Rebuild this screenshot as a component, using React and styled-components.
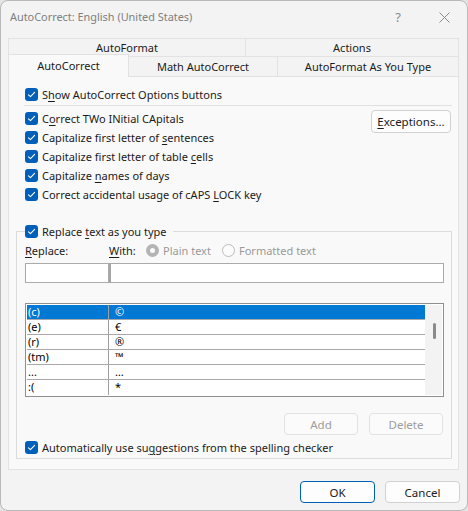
import React from 'react';
import styled, { createGlobalStyle } from 'styled-components';

const GlobalStyle = createGlobalStyle`
  html, body { margin: 0; padding: 0; background: #e4e4e4; }
  * { box-sizing: border-box; }
  body { font-family: "Noto Sans", "Segoe UI", sans-serif; font-size: 11px; color: #1b1b1b; }
`;

const Window = styled.div`
  width: 468px;
  height: 511px;
  border: 1px solid #b9b9b9;
  border-radius: 8px;
  background: #f3f3f3;
  display: flex;
  flex-direction: column;
  overflow: hidden;
`;

const TitleBar = styled.div`
  height: 32px;
  display: flex;
  align-items: center;
  padding-left: 9px;
`;

const Title = styled.div`
  flex: 1;
  color: #808080;
  font-size: 10.9px;
  padding-bottom: 1px;
`;

const TitleButton = styled.div`
  width: 46px;
  height: 32px;
  display: flex;
  align-items: center;
  justify-content: center;
  color: #8a8a8a;
  font-size: 13px;
`;

const Tabs = styled.div`
  margin: 5px 8px 0 7px;
  display: flex;
  flex-direction: column;
`;

const TabRow = styled.div`
  display: flex;
  height: ${p => p.h}px;
  position: relative;
  z-index: ${p => (p.front ? 2 : 1)};
`;

const Tab = styled.div`
  width: ${p => (p.w ? `${p.w}px` : 'auto')};
  flex: ${p => (p.w ? 'none' : 1)};
  display: flex;
  align-items: center;
  justify-content: center;
  border: 1px solid #e2e2e2;
  border-bottom: none;
  margin-left: -1px;
  &:first-child { margin-left: 0; }
  background: ${p => (p.active ? '#f9f9f9' : '#f3f3f3')};
  margin-top: ${p => (p.active ? '-2px' : '0')};
  height: ${p => (p.active ? 'calc(100% + 3px)' : '100%')};
  padding-bottom: ${p => (p.active ? '1px' : '0')};
  color: #1b1b1b;
`;

const Panel = styled.div`
  margin: 0 8px 0 7px;
  border: 1px solid #e2e2e2;
  background: #f9f9f9;
  padding: 8px 6px 10px 7px;
  display: flex;
  flex-direction: column;
`;

const Row = styled.label`
  height: 19px;
  display: flex;
  align-items: center;
  gap: 4px;
  padding-left: ${p => p.indent || 0}px;
  margin-top: ${p => p.mt || 0}px;
  white-space: nowrap;
`;

const Box = styled.span`
  width: 13px;
  height: 13px;
  border-radius: 3px;
  background: #005fb8;
  display: inline-flex;
  align-items: center;
  justify-content: center;
  flex: none;
`;

const U = styled.span`
  text-decoration: underline;
  text-underline-offset: 2px;
`;

const Separator = styled.div`
  height: 1px;
  background: #e0e0e0;
  margin: 1px 0 3px 8px;
`;

const Options = styled.div`
  display: flex;
  justify-content: space-between;
  padding-right: 1px;
`;

const Column = styled.div`
  display: flex;
  flex-direction: column;
`;

const Button = styled.button`
  font: inherit;
  font-size: 11.5px;
  width: ${p => p.w || 75}px;
  height: ${p => p.h || 22}px;
  border-radius: 4px;
  background: ${p => (p.disabled ? '#fbfbfb' : '#fdfdfd')};
  border: 1px solid ${p => (p.primary ? '#005fb8' : p.disabled ? '#e2e2e2' : '#d1d1d1')};
  color: ${p => (p.disabled ? '#9d9d9d' : '#1b1b1b')};
  padding: 0;
  margin-top: ${p => p.mt || 0}px;
`;

const Group = styled.fieldset`
  margin: 18px 0 0;
  border: 1px solid #dcdcdc;
  padding: 0 7px 1px 8px;
  min-width: 0;
`;

const Legend = styled.legend`
  padding: 0 6px 0 0;
  margin: 0;
`;

const LabelRow = styled.div`
  height: 19px;
  display: flex;
  align-items: center;
  white-space: nowrap;
`;

const FieldLabel = styled.span`
  width: ${p => p.w}px;
  flex: none;
`;

const Radio = styled.span`
  width: 13px;
  height: 13px;
  border-radius: 50%;
  border: ${p => (p.checked ? '4px solid #b4b4b4' : '1px solid #bdbdbd')};
  background: #fbfbfb;
  flex: none;
  margin-right: 4px;
`;

const RadioText = styled.span`
  color: #9a9a9a;
  width: ${p => (p.w ? `${p.w}px` : 'auto')};
`;

const Inputs = styled.div`
  margin-top: 3px;
  height: 20px;
  display: flex;
`;

const Input = styled.div`
  height: 20px;
  background: #fff;
  border: 1px solid #ababab;
  width: ${p => (p.w ? `${p.w}px` : 'auto')};
  flex: ${p => (p.w ? 'none' : 1)};
  border-left-width: ${p => (p.w ? 1 : 2)}px;
  border-left-color: #a6a6a6;
`;

const List = styled.div`
  margin-top: 20px;
  height: 94px;
  border: 1px solid #8f8f8f;
  background: #fff;
  padding: 1px;
  display: flex;
`;

const Rows = styled.div`
  flex: 1;
  display: flex;
  flex-direction: column;
`;

const ListRow = styled.div`
  height: 15px;
  flex: none;
  display: grid;
  grid-template-columns: 82px 1fr;
  border-bottom: 1px solid #a9a9a9;
  background: ${p => (p.selected ? '#0078d4' : '#fff')};
  color: ${p => (p.selected ? '#fff' : '#000')};
  line-height: 14px;
  font-size: 11px;
  &:last-child { border-bottom: none; }
`;

const Cell = styled.div`
  padding-left: ${p => p.pl || 1}px;
  border-right: ${p => (p.first ? '1px solid #a0a0a0' : 'none')};
  white-space: nowrap;
`;

const ScrollTrack = styled.div`
  width: 17px;
  background: #f3f3f3;
  display: flex;
  justify-content: center;
  padding-top: 18px;
`;

const Thumb = styled.div`
  width: 3px;
  height: 16px;
  border-radius: 2px;
  background: #8a8a8a;
  margin-left: 1px;
`;

const ButtonRow = styled.div`
  margin-top: 16px;
  display: flex;
  justify-content: flex-end;
  gap: 11px;
  padding-right: 1px;
`;

const Footer = styled.div`
  margin-top: 11px;
  display: flex;
  justify-content: flex-end;
  gap: 10px;
  padding-right: 7px;
`;

const Check = () => (
  <Box>
    <svg width="9" height="9" viewBox="0 0 9 9">
      <polyline points="1.5,4.8 3.5,6.6 7.6,2.3" fill="none" stroke="#fff" strokeWidth="1.1" strokeLinecap="round" strokeLinejoin="round" />
    </svg>
  </Box>
);

const CheckRow = ({ children, indent, mt }) => (
  <Row indent={indent} mt={mt}>
    <Check />
    <span>{children}</span>
  </Row>
);

const entries = [
  ['(c)', '©'],
  ['(e)', '€'],
  ['(r)', '®'],
  ['(tm)', '™'],
  ['...', '…'],
  [':(', '*'],
];

export default function App() {
  return (
    <>
      <GlobalStyle />
      <Window>
        <TitleBar>
          <Title>AutoCorrect: English (United States)</Title>
          <TitleButton>?</TitleButton>
          <TitleButton>
            <svg width="11" height="11" viewBox="0 0 11 11">
              <path d="M0.5 0.5 L10.5 10.5 M10.5 0.5 L0.5 10.5" stroke="#8a8a8a" strokeWidth="1" />
            </svg>
          </TitleButton>
        </TitleBar>

        <Tabs>
          <TabRow h={18}>
            <Tab w={238}>AutoFormat</Tab>
            <Tab>Actions</Tab>
          </TabRow>
          <TabRow h={20} front>
            <Tab w={121} active>AutoCorrect</Tab>
            <Tab w={150}>Math AutoCorrect</Tab>
            <Tab>AutoFormat As You Type</Tab>
          </TabRow>
        </Tabs>

        <Panel>
          <CheckRow indent={9}>S<U>h</U>ow AutoCorrect Options buttons</CheckRow>
          <Separator />
          <Options>
            <Column>
              <CheckRow indent={9}>C<U>o</U>rrect TWo INitial CApitals</CheckRow>
              <CheckRow indent={9}>Capitalize first letter of <U>s</U>entences</CheckRow>
              <CheckRow indent={9}>Capitalize first letter of table <U>c</U>ells</CheckRow>
              <CheckRow indent={9}>Capitalize <U>n</U>ames of days</CheckRow>
              <CheckRow indent={9}>Correct accidental usage of cAPS <U>L</U>OCK key</CheckRow>
            </Column>
            <Button w={80} h={23} mt={1}><U>E</U>xceptions...</Button>
          </Options>

          <Group>
            <Legend>
              <CheckRow>Replace <U>t</U>ext as you type</CheckRow>
            </Legend>
            <LabelRow>
              <FieldLabel w={84}><U>R</U>eplace:</FieldLabel>
              <FieldLabel w={37}><U>W</U>ith:</FieldLabel>
              <Radio checked />
              <RadioText w={59}>Plain text</RadioText>
              <Radio />
              <RadioText>Formatted text</RadioText>
            </LabelRow>
            <Inputs>
              <Input w={84} />
              <Input />
            </Inputs>
            <List>
              <Rows>
                {entries.map(([a, b], i) => (
                  <ListRow key={a} selected={i === 0}>
                    <Cell first pl={1}>{a}</Cell>
                    <Cell pl={6}>{b}</Cell>
                  </ListRow>
                ))}
              </Rows>
              <ScrollTrack>
                <Thumb />
              </ScrollTrack>
            </List>
            <ButtonRow>
              <Button w={74} disabled>Add</Button>
              <Button w={74} disabled>Delete</Button>
            </ButtonRow>
            <CheckRow mt={3}>Automatically use su<U>g</U>gestions from the spelling checker</CheckRow>
          </Group>
        </Panel>

        <Footer>
          <Button primary>OK</Button>
          <Button>Cancel</Button>
        </Footer>
      </Window>
    </>
  );
}
